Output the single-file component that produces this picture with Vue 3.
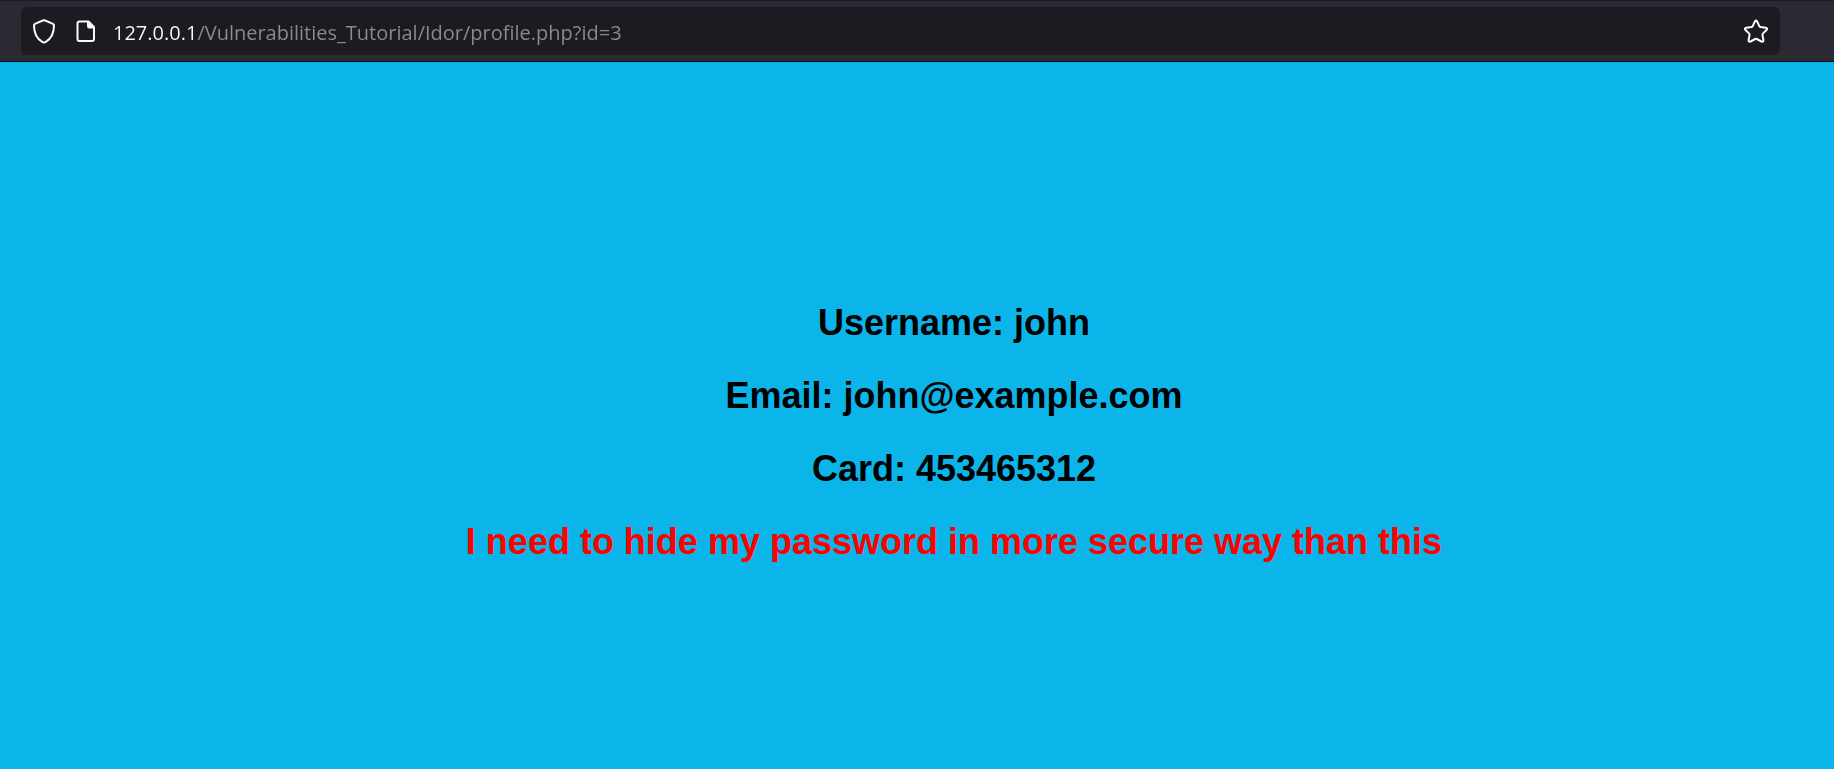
<script setup>
import { ref } from 'vue'

const url = ref('127.0.0.1/Vulnerabilities_Tutorial/Idor/profile.php?id=3')

const fields = [
  { label: 'Username', value: 'john' },
  { label: 'Email', value: 'john@example.com' },
  { label: 'Card', value: '453465312' },
]
</script>

<template>
  <div class="window">
    <header class="toolbar">
      <form class="urlbar" @submit.prevent>
        <button class="icon-button" type="button" aria-label="Tracking protection">
          <svg viewBox="0 0 26 26" fill="none" stroke="currentColor" stroke-width="2" stroke-linejoin="round">
            <path d="M13 2.2 C12.6 2.2 12.2 2.3 11.8 2.5 L4 5.9 C3.3 6.2 3 6.6 3 7.3 C3 14.5 6 20.8 11.2 23.9 C12.4 24.6 13.6 24.6 14.8 23.9 C20 20.8 23 14.5 23 7.3 C23 6.6 22.7 6.2 22 5.9 L14.2 2.5 C13.8 2.3 13.4 2.2 13 2.2 Z" />
          </svg>
        </button>
        <button class="icon-button" type="button" aria-label="Site information">
          <svg viewBox="0 0 26 26" fill="none" stroke="currentColor" stroke-width="2" stroke-linejoin="round">
            <path d="M6.5 3.5 H15.5 L21 9 V21 A2 2 0 0 1 19 23 H6.5 A2 2 0 0 1 4.5 21 V5.5 A2 2 0 0 1 6.5 3.5 Z" />
            <path d="M14.5 3 V8.5 A1.5 1.5 0 0 0 16 10 H21.5 Z" fill="currentColor" stroke-width="1" />
          </svg>
        </button>
        <input v-model="url" class="address" type="text" aria-label="Address" spellcheck="false" />
        <button class="icon-button" type="button" aria-label="Bookmark this page">
          <svg viewBox="0 0 26 26" fill="none" stroke="currentColor" stroke-width="2" stroke-linejoin="round">
            <path d="M11.9 3.4 Q13 1.6 14.1 3.4 L16.4 8.4 Q16.7 9 17.4 9.1 L22.7 9.8 Q25 10.3 23.5 12 L19.8 15.6 Q19.3 16.1 19.4 16.8 L20.4 22 Q20.6 24.4 18.5 23.5 L13.8 21 Q13 20.6 12.2 21 L7.5 23.5 Q5.4 24.4 5.6 22 L6.6 16.8 Q6.7 16.1 6.2 15.6 L2.5 12 Q1 10.3 3.3 9.8 L8.6 9.1 Q9.3 9 9.6 8.4 Z" />
          </svg>
        </button>
      </form>
    </header>

    <main class="page">
      <h2 v-for="field in fields" :key="field.label" class="line">{{ field.label }}: {{ field.value }}</h2>
      <h2 class="line warning">I need to hide my password in more secure way than this</h2>
    </main>
  </div>
</template>

<style>
body {
  margin: 0;
}
</style>

<style scoped>
.window {
  display: flex;
  flex-direction: column;
  min-height: 100vh;
  background: #0bb5ea;
}

.toolbar {
  padding: 6px 54px 6px 21px;
  border-top: 1px solid #1c1b22;
  border-bottom: 1px solid #0c0c0d;
  background: #2b2a33;
}

.urlbar {
  display: flex;
  align-items: center;
  height: 48px;
  padding: 0 11px 0 10px;
  border-radius: 6px;
  background: #1c1b22;
}

.icon-button {
  display: flex;
  flex: none;
  margin: 0 14px 0 0;
  padding: 0;
  border: 0;
  background: none;
  color: #fbfbfe;
}

.icon-button:first-child {
  margin-right: 16px;
}

.icon-button:last-child {
  margin-right: 0;
}

.icon-button svg {
  width: 26px;
  height: 26px;
}

.address {
  flex: 1;
  min-width: 0;
  height: 32px;
  margin: 0;
  padding: 2px 0 0;
  border: 0;
  outline: 0;
  background: linear-gradient(to right, #fbfbfe 85px, #8b8b90 85px);
  background-clip: text;
  -webkit-text-fill-color: transparent;
  caret-color: #fbfbfe;
  font: 20px "Open Sans", "Noto Sans", sans-serif;
}

.page {
  display: flex;
  flex: 1;
  flex-direction: column;
  justify-content: center;
  padding: 33px 0 0 74px;
  font-family: Arial, "Liberation Sans", sans-serif;
  text-align: center;
}

.line {
  margin: 0;
  color: #000;
  font-size: 36px;
  font-weight: 700;
  line-height: 73px;
}

.warning {
  color: #f00;
}
</style>
